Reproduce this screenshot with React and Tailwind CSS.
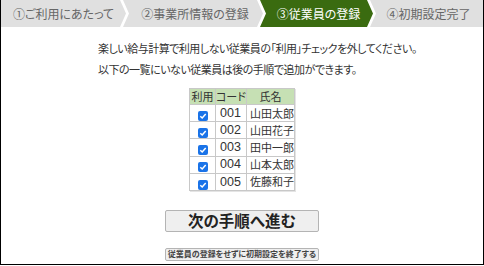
import React from 'react';

const steps = [
  { label: '①ご利用にあたって', w: 'w-[125px]', shape: 'first' },
  { label: '②事業所情報の登録', w: 'w-[140px]', shape: 'mid' },
  { label: '③従業員の登録', w: 'w-[113px]', shape: 'mid', active: true },
  { label: '④初期設定完了', w: 'w-[113px]', shape: 'last' },
];

const shapes = {
  first: '[clip-path:polygon(0_0,calc(100%_-_6px)_0,100%_50%,calc(100%_-_6px)_100%,0_100%)]',
  mid: '[clip-path:polygon(0_0,calc(100%_-_6px)_0,100%_50%,calc(100%_-_6px)_100%,0_100%,6px_50%)]',
  last: '[clip-path:polygon(0_0,100%_0,100%_100%,0_100%,6px_50%)]',
};

const employees = [
  { code: '001', name: '山田太郎' },
  { code: '002', name: '山田花子' },
  { code: '003', name: '田中一郎' },
  { code: '004', name: '山本太郎' },
  { code: '005', name: '佐藤和子' },
];

const Check = () => (
  <span className="inline-flex items-center justify-center w-[10px] h-[10px] rounded-[2px] bg-[#1a73e8] align-middle">
    <svg width="8" height="8" viewBox="0 0 8 8">
      <path d="M1.3 4.2 L3.2 6 L6.7 2" fill="none" stroke="#fff" strokeWidth="1.5" />
    </svg>
  </span>
);

export default function App() {
  return (
    <div className="w-[484px] h-[265px] overflow-hidden bg-white border-x border-b border-black text-[#333] font-['Noto_Sans_CJK_JP',sans-serif] [font-feature-settings:'palt']">
      {/* Steps */}
      <div className="flex h-[27px]">
        {steps.map((s, i) => (
          <div
            key={s.label}
            className={`${s.w} ${shapes[s.shape]} ${i > 0 ? '-ml-[3px]' : ''} ${
              s.active ? 'bg-[#3a6b10] text-white' : 'bg-[#e0e0e0] text-[#666]'
            } flex items-center justify-center text-[12px] leading-none shrink-0 whitespace-nowrap`}
          >
            <span className={s.shape === 'first' ? '' : 'pl-[4px]'}>{s.label}</span>
          </div>
        ))}
      </div>

      {/* Message */}
      <div className="mt-[11px] pl-[97px] text-[11px] tracking-[-0.5px] leading-[21px] whitespace-nowrap">
        <p>楽しい給与計算で利用しない従業員の「利用」チェックを外してください。</p>
        <p>以下の一覧にいない従業員は後の手順で追加ができます。</p>
      </div>

      {/* Table */}
      <div className="flex justify-center mt-[8px]">
        <table className="table-fixed w-[105px] border-collapse border border-[#c8c8c8] shadow-[1px_1px_0_#e4e4e4]">
          <colgroup>
            <col className="w-[26px]" />
            <col className="w-[31px]" />
            <col className="w-[48px]" />
          </colgroup>
          <thead>
            <tr className="h-[16px] bg-[#c6e0b4] text-[11px]">
              <th className="border border-[#c8c8c8] font-normal p-0 leading-none whitespace-nowrap">利用</th>
              <th className="border border-[#c8c8c8] font-normal p-0 leading-none whitespace-nowrap">コード</th>
              <th className="border border-[#c8c8c8] font-normal p-0 leading-none whitespace-nowrap">氏名</th>
            </tr>
          </thead>
          <tbody>
            {employees.map(e => (
              <tr key={e.code} className="h-[17.2px]">
                <td className="border border-[#c8c8c8] text-center p-0 leading-none">
                  <Check />
                </td>
                <td className="border border-[#c8c8c8] pl-[4px] pr-0 py-0 leading-none font-['Liberation_Sans',sans-serif] text-[12.5px]">
                  {e.code}
                </td>
                <td className="border border-[#c8c8c8] pl-[3px] pr-0 py-0 leading-none text-[11px] whitespace-nowrap overflow-hidden">
                  {e.name}
                </td>
              </tr>
            ))}
          </tbody>
        </table>
      </div>

      {/* Buttons */}
      <div className="flex flex-col items-center mt-[19px]">
        <button className="w-[154px] h-[22px] bg-[#efefef] border border-[#b4b4b4] rounded-[2px] text-[15.5px] font-bold text-[#222] leading-none flex items-center justify-center">
          次の手順へ進む
        </button>
        <button className="mt-[16px] w-[154px] h-[13px] bg-[#efefef] border border-[#b4b4b4] rounded-[2px] text-[8px] font-bold text-[#444] leading-none flex items-center justify-center whitespace-nowrap">
          従業員の登録をせずに初期設定を終了する
        </button>
      </div>
    </div>
  );
}
